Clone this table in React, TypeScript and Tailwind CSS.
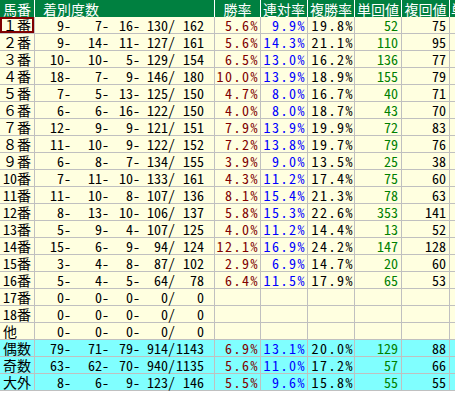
const mono = "font-['Noto_Sans_Mono_CJK_JP','Noto_Sans_CJK_JP','DejaVu_Sans_Mono',monospace]";

type Row = {
  label: string;
  counts: [number, number, number, number, number];
  stats?: [string, string, string, number, number];
  total?: boolean;
};

const rows: Row[] = [
  { label: "１番", counts: [9, 7, 16, 130, 162], stats: ["5.6%", "9.9%", "19.8%", 52, 75] },
  { label: "２番", counts: [9, 14, 11, 127, 161], stats: ["5.6%", "14.3%", "21.1%", 110, 95] },
  { label: "３番", counts: [10, 10, 5, 129, 154], stats: ["6.5%", "13.0%", "16.2%", 136, 77] },
  { label: "４番", counts: [18, 7, 9, 146, 180], stats: ["10.0%", "13.9%", "18.9%", 155, 79] },
  { label: "５番", counts: [7, 5, 13, 125, 150], stats: ["4.7%", "8.0%", "16.7%", 40, 71] },
  { label: "６番", counts: [6, 6, 16, 122, 150], stats: ["4.0%", "8.0%", "18.7%", 43, 70] },
  { label: "７番", counts: [12, 9, 9, 121, 151], stats: ["7.9%", "13.9%", "19.9%", 72, 83] },
  { label: "８番", counts: [11, 10, 9, 122, 152], stats: ["7.2%", "13.8%", "19.7%", 79, 76] },
  { label: "９番", counts: [6, 8, 7, 134, 155], stats: ["3.9%", "9.0%", "13.5%", 25, 38] },
  { label: "10番", counts: [7, 11, 10, 133, 161], stats: ["4.3%", "11.2%", "17.4%", 75, 60] },
  { label: "11番", counts: [11, 10, 8, 107, 136], stats: ["8.1%", "15.4%", "21.3%", 78, 63] },
  { label: "12番", counts: [8, 13, 10, 106, 137], stats: ["5.8%", "15.3%", "22.6%", 353, 141] },
  { label: "13番", counts: [5, 9, 4, 107, 125], stats: ["4.0%", "11.2%", "14.4%", 13, 52] },
  { label: "14番", counts: [15, 6, 9, 94, 124], stats: ["12.1%", "16.9%", "24.2%", 147, 128] },
  { label: "15番", counts: [3, 4, 8, 87, 102], stats: ["2.9%", "6.9%", "14.7%", 20, 60] },
  { label: "16番", counts: [5, 4, 5, 64, 78], stats: ["6.4%", "11.5%", "17.9%", 65, 53] },
  { label: "17番", counts: [0, 0, 0, 0, 0] },
  { label: "18番", counts: [0, 0, 0, 0, 0] },
  { label: "他", counts: [0, 0, 0, 0, 0] },
  { label: "偶数", counts: [79, 71, 79, 914, 1143], stats: ["6.9%", "13.1%", "20.0%", 129, 88], total: true },
  { label: "奇数", counts: [63, 62, 70, 940, 1135], stats: ["5.6%", "11.0%", "17.2%", 57, 66], total: true },
  { label: "大外", counts: [8, 6, 9, 123, 146], stats: ["5.5%", "9.6%", "15.8%", 55, 55], total: true },
];

const line = "border-r border-[#c0c0c0]";

function DataRow({ row, index }: { row: Row; index: number }) {
  const bg = row.total ? "bg-[#80ffff]" : "bg-[#ffffe0]";
  const [a, b, c, d, e] = row.counts;
  const s = row.stats;
  return (
    <div className={`flex h-[17px] border-b border-[#c0c0c0] ${bg}`}>
      <div className={`relative flex w-[35px] shrink-0 items-center pl-[3px] ${line}`}>
        {index === 0 && <div className="absolute inset-0 border-2 border-[#800000]" />}
        <span className="text-[14px] leading-none">{row.label}</span>
      </div>
      <div className={`flex w-[180px] shrink-0 items-center text-[14px] leading-none ${line}`}>
        <span className="w-[36px] text-right">{a}-</span>
        <span className="w-[38px] text-right">{b}-</span>
        <span className="w-[31px] text-right">{c}-</span>
        <span className="w-[35px] text-right">{d}/</span>
        <span className="w-[29px] text-right">{e}</span>
      </div>
      <div className={`flex w-[46px] shrink-0 items-center justify-end pr-[1px] text-[14px] leading-none tracking-[1.5px] text-[#800000] ${line}`}>
        {s?.[0]}
      </div>
      <div className={`flex w-[47px] shrink-0 items-center justify-end pr-[1px] text-[14px] leading-none tracking-[1.5px] text-[#0000ff] ${line}`}>
        {s?.[1]}
      </div>
      <div className={`flex w-[47px] shrink-0 items-center justify-end pr-0 text-[14px] leading-none tracking-[1.5px] text-black ${line}`}>
        {s?.[2]}
      </div>
      <div className={`flex w-[47px] shrink-0 items-center justify-end pr-[3px] text-[14px] leading-none text-[#008000] ${line}`}>
        {s?.[3]}
      </div>
      <div className={`flex w-[48px] shrink-0 items-center justify-end pr-[3px] text-[14px] leading-none text-black ${line}`}>
        {s?.[4]}
      </div>
      <div className="w-[30px] shrink-0" />
    </div>
  );
}

export default function App() {
  return (
    <div className={`w-[455px] h-[393px] overflow-hidden bg-white text-black ${mono}`}>
      <div className="flex h-[17px] bg-[#008040] text-[14px] leading-none text-white">
        <div className="flex w-[35px] shrink-0 items-center pl-[3px] border-r border-white">馬番</div>
        <div className="flex w-[180px] shrink-0 items-center pl-[8px] border-r border-white">着別度数</div>
        <div className="flex w-[46px] shrink-0 items-center justify-center border-r border-white">勝率</div>
        <div className="flex w-[47px] shrink-0 items-center justify-center border-r border-white">連対率</div>
        <div className="flex w-[47px] shrink-0 items-center justify-center border-r border-white">複勝率</div>
        <div className="flex w-[47px] shrink-0 items-center justify-center border-r border-white">単回値</div>
        <div className="flex w-[48px] shrink-0 items-center justify-center border-r border-white">複回値</div>
        <div className="flex w-[30px] shrink-0 items-center pl-[1px]">単複</div>
      </div>
      {rows.map((row, i) => (
        <DataRow key={row.label} row={row} index={i} />
      ))}
    </div>
  );
}
